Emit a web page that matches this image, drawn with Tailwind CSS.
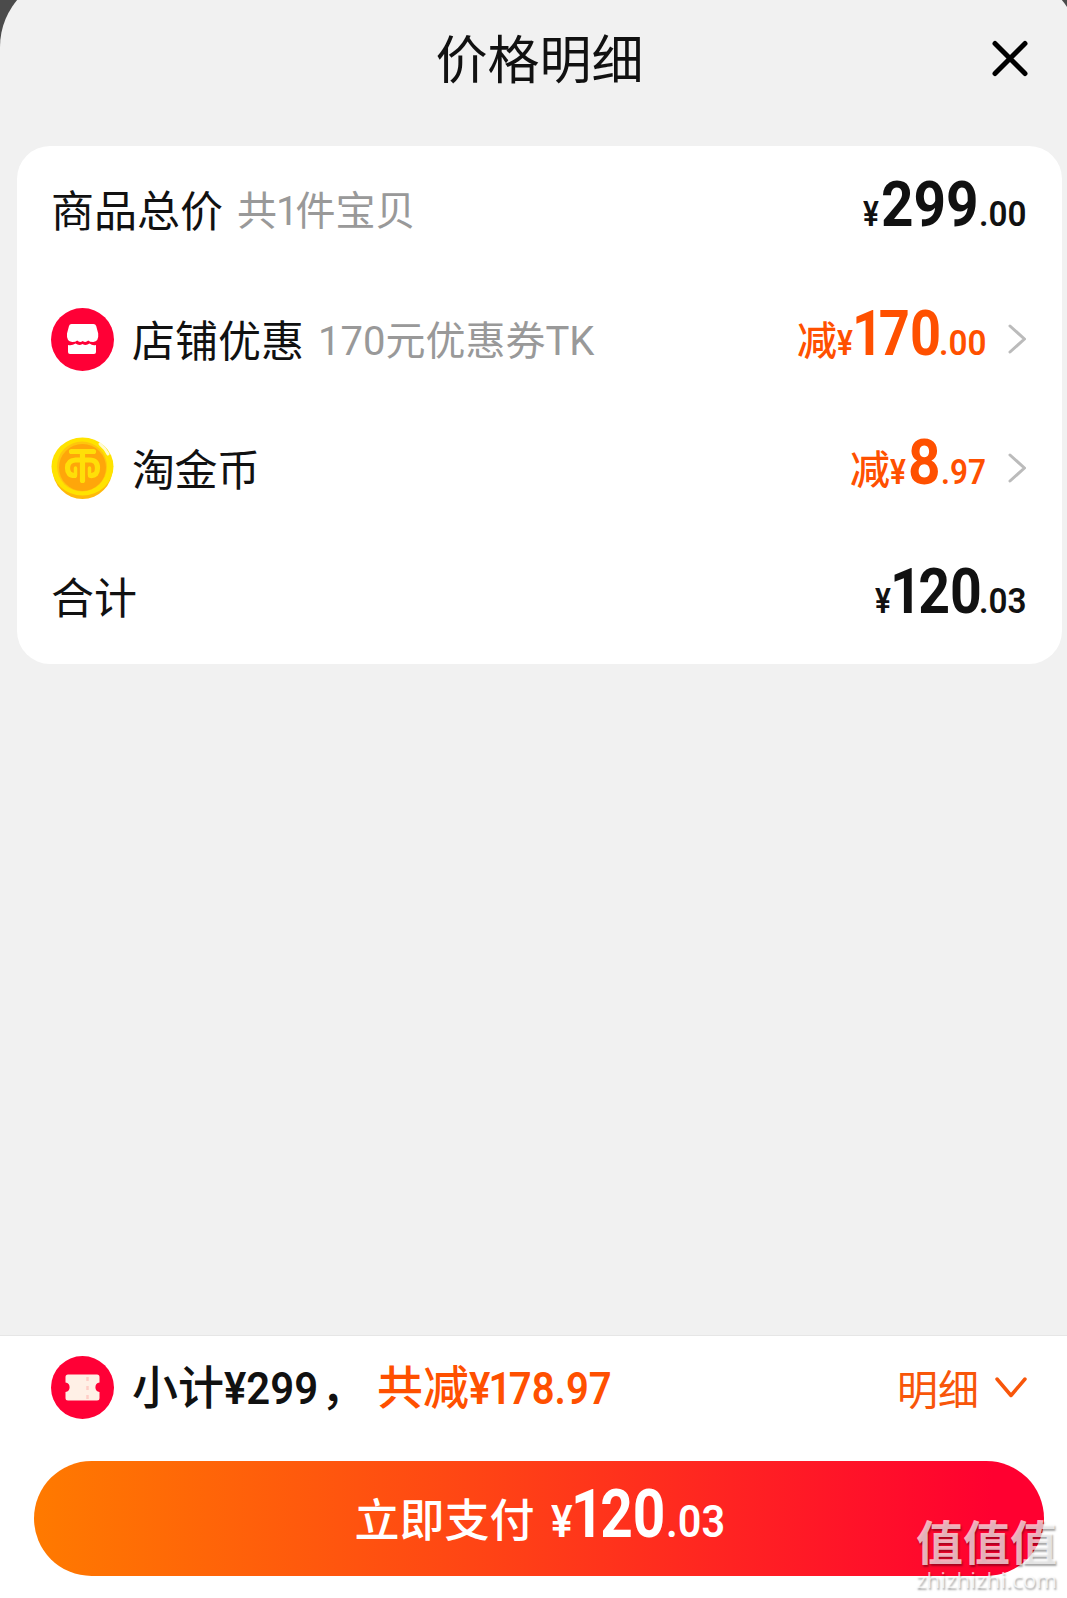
<!DOCTYPE html>
<html lang="zh-CN">
<head>
    <meta charset="UTF-8">
    <meta name="viewport" content="width=device-width, initial-scale=1.0">
    <title>价格明细</title>
    <script src="https://cdn.jsdelivr.net/npm/@tailwindcss/browser@4"></script>
    <style>
        body { font-family: "Noto Sans CJK SC", sans-serif; }
        .num { font-family: Roboto, "Noto Sans CJK SC", sans-serif; }
    </style>
</head>
<body class="bg-[#4b4b4b] h-[1598px] overflow-hidden text-[#111]">
    <!-- Bottom sheet, a little larger than the viewport -->
    <div class="relative w-[1079px] h-[1624px] -mt-[26px] pt-[26px] rounded-t-[73px] bg-[#f1f1f1] flex flex-col overflow-hidden">
        <header class="h-[146px] shrink-0 flex items-start justify-between pl-[86px] pr-[51px]">
            <h1 class="flex-1 text-center text-[52px] leading-[113px]">价格明细</h1>
            <button class="mt-[40px] -ml-px" aria-label="关闭">
                <svg class="w-[36px] h-[37px]" viewBox="0 0 36 37" fill="none" stroke="#000" stroke-width="5" stroke-linecap="round">
                    <path d="M3 3.500L33 33.500M33 3.500L3 33.500"/>
                </svg>
            </button>
        </header>

        <!-- Price rows -->
        <main class="mx-[17px] h-[518px] rounded-[33px] bg-white pl-[34px] pr-[36px] pb-[2px] grid grid-rows-4">
            <div class="flex items-center justify-between">
                <div class="flex items-center gap-[14px] -mt-[5px]">
                    <span class="text-[43px] leading-none">商品总价</span>
                    <span class="text-[40px] leading-none text-[#999] mt-[3px]">共<span class="num -ml-px tracking-[-3px]">1</span>件宝贝</span>
                </div>
                <div class="num flex items-baseline leading-none font-bold -mt-[13px]">
                    <span class="text-[35px] font-semibold w-[18px] origin-left scale-x-85">¥</span>
                    <span class="text-[63px] w-[98px] origin-left scale-x-90">299</span>
                    <span class="text-[35px] font-semibold w-[47px] origin-left scale-x-95">.00</span>
                </div>
            </div>

            <div class="flex items-center justify-between">
                <div class="flex items-center">
                    <svg class="w-[63px] h-[63px] mr-[18px]" viewBox="0 0 63 63">
                        <circle cx="31.500" cy="31.500" r="31.500" fill="#ff0036"/>
                        <path fill="#fff" d="M20.500 16h22q2 0 2.700 2l2 7.500q.8 8-5 8.500q-3.500 0-5-1.500q-2.500 2.500-5.500.5q-3 2-5.500-.5q-1.500 1.500-5 1.500q-6-.5-5.200-8.500l2-7.500q.5-2 2.500-2z"/>
                        <path fill="#fff" d="M17 37q4 1 7.500-1.500q3.500 2.500 7 .5q3.500 2 7-.5q3 2.500 6.500 1.500v7q0 2-2 2h-24q-2 0-2-2z"/>
                    </svg>
                    <span class="text-[43px] leading-none mr-[14px] -mt-[3px]">店铺优惠</span>
                    <span class="text-[40px] leading-none text-[#999]"><span class="num">170</span>元优惠券<span class="num">TK</span></span>
                </div>
                <div class="flex items-center">
                    <div class="num flex items-baseline leading-none font-bold text-[#ff5000] -mt-[12px] mr-[22px]">
                        <span class="text-[40px] font-medium">减</span>
                        <span class="text-[35px] font-semibold w-[15px] origin-left scale-x-85">¥</span>
                        <span class="text-[63px] w-[87px] origin-left scale-x-86"><span class="tracking-[-5px]">1</span>70</span>
                        <span class="text-[35px] font-semibold w-[47px] origin-left scale-x-95">.00</span>
                    </div>
                    <svg class="w-[18px] h-[30px] -mt-[2px]" viewBox="0 0 18 30" fill="none" stroke="#bbb" stroke-width="3" stroke-linecap="round" stroke-linejoin="round">
                        <path d="M2 2l14.500 13L2 28"/>
                    </svg>
                </div>
            </div>

            <div class="flex items-center justify-between">
                <div class="flex items-center">
                    <svg class="w-[63px] h-[63px] mr-[18px]" viewBox="0 0 63 63">
                        <ellipse cx="31.500" cy="31.500" rx="30" ry="30.500" fill="#ffb90a"/>
                        <ellipse cx="31.500" cy="29.500" rx="31" ry="29" fill="#ffe300"/>
                        <circle cx="31" cy="29.500" r="25" fill="#ffc60d"/>
                        <circle cx="31.500" cy="30.500" r="23.500" fill="#ffa60a"/>
                        <g fill="none" stroke="#ffdf08" stroke-width="5.200" stroke-linecap="round" stroke-linejoin="round">
                            <path d="M20.500 14.500h22M31.500 15v28.500M23.500 38.500q-7 0-7-7.500t8-8h14q8 0 8 8t-7 7.500"/>
                            <path stroke-width="3.500" d="M24.500 31v7M38.500 31v7"/>
                        </g>
                        <path d="M49 7q5 4 8 10" fill="none" stroke="#fffbd0" stroke-width="3" stroke-linecap="round"/>
                    </svg>
                    <span class="text-[43px] leading-none -mt-[3px] tracking-[-0.500px]">淘金币</span>
                </div>
                <div class="flex items-center">
                    <div class="num flex items-baseline leading-none font-bold text-[#ff5000] -mt-[12px] mr-[22px]">
                        <span class="text-[40px] font-medium">减</span>
                        <span class="text-[35px] font-semibold w-[18px] origin-left scale-x-85">¥</span>
                        <span class="text-[63px] w-[33px] origin-left scale-x-90">8</span>
                        <span class="text-[35px] font-semibold w-[45px] origin-left scale-x-90">.97</span>
                    </div>
                    <svg class="w-[18px] h-[30px] -mt-[2px]" viewBox="0 0 18 30" fill="none" stroke="#bbb" stroke-width="3" stroke-linecap="round" stroke-linejoin="round">
                        <path d="M2 2l14.500 13L2 28"/>
                    </svg>
                </div>
            </div>

            <div class="flex items-center justify-between">
                <span class="text-[43px] leading-none -mt-[4px]">合计</span>
                <div class="num flex items-baseline leading-none font-bold -mt-[12px]">
                    <span class="text-[35px] font-semibold w-[15px] origin-left scale-x-85">¥</span>
                    <span class="text-[63px] w-[89px] origin-left scale-x-88"><span class="tracking-[-4px]">1</span>20</span>
                    <span class="text-[35px] font-semibold w-[47px] origin-left scale-x-95">.03</span>
                </div>
            </div>
        </main>

        <!-- Payment bar -->
        <footer class="mt-auto h-[263px] bg-white border-t border-[#e6e6e6]">
            <div class="h-[125px] pt-[20px] pl-[51px] pr-[52px] flex items-start">
                <svg class="w-[63px] h-[63px] mr-[18px]" viewBox="0 0 63 63">
                    <circle cx="31.500" cy="31.500" r="31.500" fill="#ff0036"/>
                    <path fill="#fff0e6" d="M17 18.500h29q2.500 0 2.500 2.500v5.500a4.800 4.800 0 0 0 0 9.500v6q0 2.500-2.500 2.500H17q-2.500 0-2.500-2.500v-6a4.800 4.800 0 0 0 0-9.500V21q0-2.500 2.500-2.500z"/>
                    <path d="M36.500 21v22" stroke="#ffcdc6" stroke-width="2.500" stroke-dasharray="4 5"/>
                </svg>
                <div class="num flex items-baseline leading-[64px] text-[45px] font-semibold">
                    <span class="text-[46px] font-medium">小计</span>
                    <span class="w-[97px] origin-left scale-x-93">¥299</span>
                    <span class="text-[46px] font-medium">，</span>
                    <span class="text-[46px] font-medium text-[#ff5000] ml-[10px]">共减</span>
                    <span class="text-[#ff5000] origin-left scale-x-89">¥<span class="-ml-[2px] tracking-[-3px]">1</span>78.97</span>
                </div>
                <div class="ml-auto flex items-center text-[#f8560a] text-[41px] leading-[63px]">
                    明细
                    <svg class="w-[32px] h-[22px] ml-[16px]" viewBox="0 0 32 22" fill="none" stroke="currentColor" stroke-width="3.500" stroke-linecap="round" stroke-linejoin="round">
                        <path d="M2 2l14 16.500L30 2"/>
                    </svg>
                </div>
            </div>
            <button class="block ml-[34px] w-[1010px] h-[115px] rounded-full bg-linear-to-r/srgb from-[#ff7a00] via-[#ff4315] via-45% to-[#ff0030] to-95% text-white">
                <span class="num flex items-baseline justify-center leading-none font-bold -mt-[8px]">
                    <span class="text-[45px] font-medium mr-[16px]">立即支付</span>
                    <span class="text-[45px] font-semibold w-[20px] origin-left scale-x-90">¥</span>
                    <span class="text-[66px] w-[95px] origin-left scale-x-86"><span class="tracking-[-4px]">1</span>20</span>
                    <span class="text-[45px] font-semibold w-[58px] origin-left scale-x-92">.03</span>
                </span>
            </button>
        </footer>

        <!-- Watermark -->
        <div class="absolute left-[916px] top-[1539px] w-[150px] text-white/70 [text-shadow:1px_2px_2px_rgb(0_0_0/0.35)]">
            <div class="text-[47px] leading-[54px] font-bold">值值值</div>
            <div class="font-['Open_Sans'] text-[22.5px] leading-[28px] font-medium -mt-px">zhizhizhi.com</div>
        </div>
    </div>
</body>
</html>
